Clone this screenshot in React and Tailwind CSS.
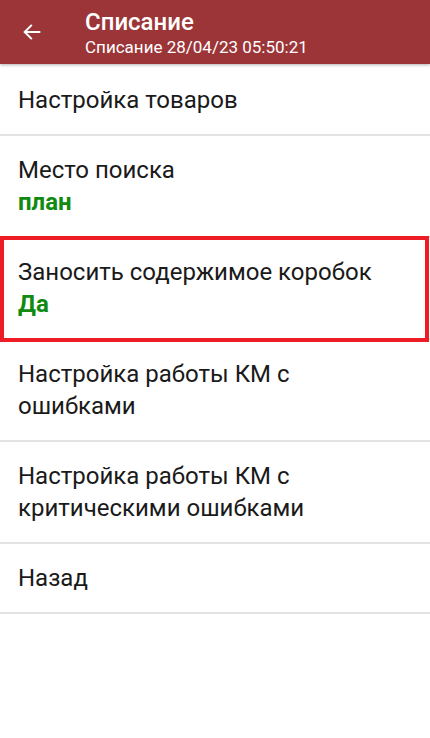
import React from "react";

const items = [
  { lines: ["Настройка товаров"] },
  { lines: ["Место поиска"], value: "план" },
  { lines: ["Заносить содержимое коробок"], value: "Да", highlight: true },
  { lines: ["Настройка работы КМ с", "ошибками"] },
  { lines: ["Настройка работы КМ с", "критическими ошибками"] },
  { lines: ["Назад"] },
];

export default function App() {
  return (
    <div
      className="w-[430px] h-[738px] bg-white overflow-hidden"
      style={{ fontFamily: "Roboto, 'Noto Sans', sans-serif" }}
    >
      <div className="relative z-10 h-[64px] bg-[#9c3538] flex items-center shadow-[0_1px_3px_rgba(0,0,0,0.3)]">
        <div className="w-[85px] flex items-center pl-[21px]">
          <svg width="22" height="22" viewBox="0 0 24 24" fill="none">
            <path d="M20 12H4.5M11 5l-7 7 7 7" stroke="#fff" strokeWidth="2.2" strokeLinecap="square" />
          </svg>
        </div>
        <div className="flex flex-col">
          <div className="text-white text-[24px] leading-[28px] font-medium">Списание</div>
          <div className="text-white text-[17px] leading-[20px] mt-[1px]">Списание 28/04/23 05:50:21</div>
        </div>
      </div>
      <div className="flex flex-col pt-[2px]">
        {items.map((it, i) => (
          <div key={i} className="relative">
            <div className="px-[18px] py-[18px] text-[24px] leading-[32px] text-[#1a1a1a]">
              {it.lines.map((l, j) => (
                <div key={j}>{l}</div>
              ))}
              {it.value && <div className="font-bold text-[#108a10]">{it.value}</div>}
            </div>
            <div className="h-[2px] bg-[#e3e3e3]" />
            {it.highlight && (
              <div className="absolute left-0 right-[1px] top-[-2px] bottom-[-2px] border-[4px] border-[#ee1c25]" />
            )}
          </div>
        ))}
      </div>
    </div>
  );
}
